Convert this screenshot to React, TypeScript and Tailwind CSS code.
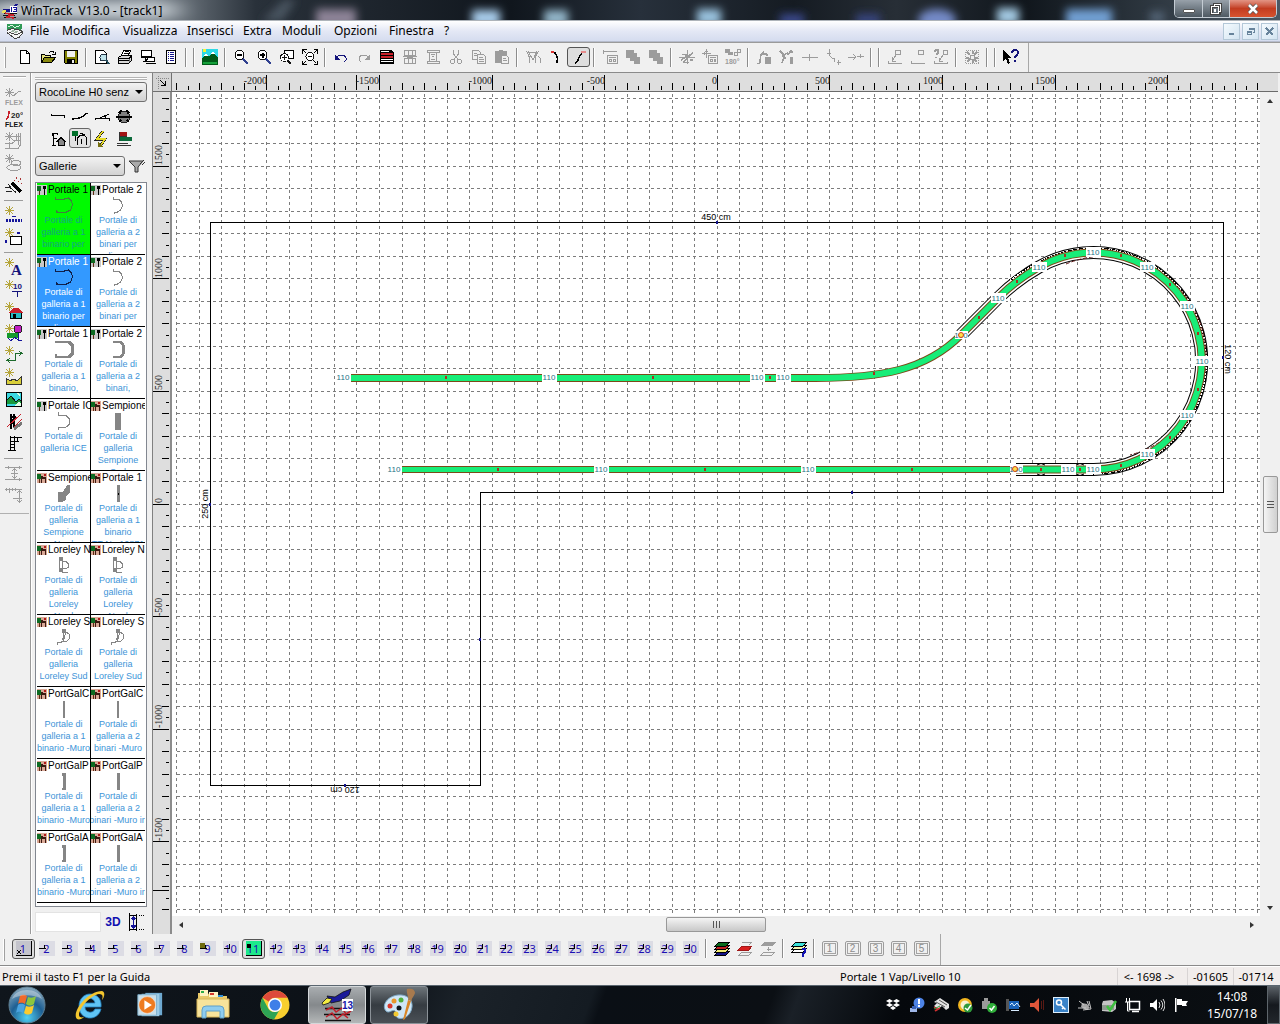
import React from "react";

type Kids = { children?: React.ReactNode };

const UI = "font-['Noto_Sans',sans-serif]";
const ARIAL = "font-['Liberation_Sans',Arial,sans-serif]";

function Icon({ children, size = 16, smooth = false }: Kids & { size?: number; smooth?: boolean }) {
  return (
    <svg
      viewBox={`0 0 ${size} ${size}`}
      width={size}
      height={size}
      fill="none"
      shapeRendering={smooth ? "auto" : "crispEdges"}
      aria-hidden="true"
      className="shrink-0"
    >
      {children}
    </svg>
  );
}

const K = "#000";
const G = "#9c9c9c";

const S = ({ d, c = K, w = 1, f = "none" }: { d: string; c?: string; w?: number; f?: string }) => (
  <path d={d} stroke={c} strokeWidth={w} fill={f} />
);
const F = ({ d, c = K }: { d: string; c?: string }) => <path d={d} fill={c} />;

/* ---------- title bar ---------- */

function TitleBar() {
  return (
    <header className="relative flex h-[21px] shrink-0 items-center overflow-hidden bg-[#121820]">
      <svg className="absolute inset-0 h-full w-full" viewBox="0 0 1280 21" preserveAspectRatio="none" aria-hidden="true">
        <defs>
          <filter id="soft" x="-30%" y="-80%" width="160%" height="260%">
            <feGaussianBlur stdDeviation="4" />
          </filter>
          <filter id="wide" x="-30%" y="-80%" width="160%" height="260%">
            <feGaussianBlur stdDeviation="14 5" />
          </filter>
          <linearGradient id="tb" x1="0" y1="0" x2="1" y2="0">
            <stop offset="0" stopColor="#59636e" />
            <stop offset="0.12" stopColor="#7d868e" />
            <stop offset="0.2" stopColor="#29313a" />
            <stop offset="0.4" stopColor="#10161d" />
            <stop offset="0.5" stopColor="#27303b" />
            <stop offset="0.62" stopColor="#151b22" />
            <stop offset="0.7" stopColor="#272e36" />
            <stop offset="0.8" stopColor="#10161c" />
            <stop offset="1" stopColor="#4b5864" />
          </linearGradient>
        </defs>
        <rect width="1280" height="21" fill="url(#tb)" />
        <rect x="-10" y="2" width="185" height="16" fill="#c3cad0" filter="url(#wide)" />
        <g filter="url(#soft)">
          <path d="M262 21l22-21h12l-14 21z" fill="#4a5560" />
          <rect x="316" y="9" width="40" height="18" fill="#8d8397" />
          <rect x="472" y="10" width="28" height="16" fill="#a9cdec" />
          <rect x="544" y="10" width="24" height="16" fill="#93b6c9" />
          <rect x="697" y="9" width="24" height="16" fill="#9ac3df" />
          <rect x="780" y="14" width="24" height="12" fill="#3a4a8c" />
          <rect x="856" y="14" width="24" height="12" fill="#39447f" />
          <ellipse cx="937" cy="20" rx="19" ry="11" fill="#7389c6" />
          <rect x="997" y="8" width="22" height="16" fill="#a4cbe4" />
          <rect x="1066" y="9" width="46" height="18" fill="#719fd2" />
          <rect x="1150" y="12" width="14" height="10" fill="#56677a" />
        </g>
        <rect y="20" width="1280" height="1" fill="#aeb4ba" />
      </svg>
      <span className="relative ml-[2px]">
        <AppLogo />
      </span>
      <h1 className={`relative ml-[3px] whitespace-pre text-[12px] leading-[20px] text-black ${UI}`}>
        WinTrack  V13.0 - [track1]
      </h1>
      <div className="relative mr-[3px] ml-auto flex h-[18px] self-start overflow-hidden rounded-b-[5px] border border-t-0 border-[#c4ccd4]">
        <button aria-label="Minimize" className="flex w-[28px] items-center justify-center border-r border-[#c4ccd4] bg-gradient-to-b from-[#98a1aa] to-[#4e5962]">
          <span className="mt-1 h-[4px] w-[12px] rounded-[1px] border border-[#555] bg-white" />
        </button>
        <button aria-label="Restore" className="flex w-[27px] items-center justify-center border-r border-[#c4ccd4] bg-gradient-to-b from-[#98a1aa] to-[#4e5962]">
          <Icon size={12}>
            <S d="M1 3h8v8H1zM4 3V1h7v7H9" c="#444" w={3} />
            <S d="M4 3V1.500h6.500v7H9M1.500 3.500h7v7h-7zM4.500 6v2h1V6z" c="#fff" />
          </Icon>
        </button>
        <button aria-label="Close" className="flex w-[46px] items-center justify-center bg-gradient-to-b from-[#e29484] via-[#c23c20] to-[#d8532f]">
          <Icon size={12} smooth>
            <S d="M2 2l8 8M10 2l-8 8" c="#555" w={4} />
            <S d="M2 2l8 8M10 2l-8 8" c="#fff" w={2.5} />
          </Icon>
        </button>
      </div>
    </header>
  );
}

function AppLogo() {
  return (
    <Icon>
      <F d="M1 6h6l7-5h2l-3 5-6 3H1z" c="#14148a" />
      <F d="M1 7h3v3H0z" c="#e8e060" />
      <F d="M8 3h7v7H8z" c="#fff" />
      <S d="M9.500 4v5M11 4.500h3v4h-3M12 6.500h2" c="#14149a" />
      <S d="M2 10.500h13M1 12.500h12M2 14.500h12" c="#111" />
      <S d="M3 10l8 2-7 2 8 1" c="#c8202a" w={1.5} />
    </Icon>
  );
}

/* ---------- menu bar ---------- */

const MENUS: [string, string][] = [
  ["File", "w-[32px]"],
  ["Modifica", "w-[61px]"],
  ["Visualizza", "w-[64px]"],
  ["Inserisci", "w-[56px]"],
  ["Extra", "w-[39px]"],
  ["Moduli", "w-[52px]"],
  ["Opzioni", "w-[55px]"],
  ["Finestra", "w-[55px]"],
  ["?", "w-[20px]"],
];

function MenuBar() {
  return (
    <nav className="flex h-[21px] shrink-0 items-center border-b border-[#b6bccc] bg-gradient-to-b from-white via-[#e4e8f5] to-[#d5dcef]">
      <span className="ml-[7px] mr-[7px]">
        <Icon>
          <F d="M0 1h15v5l-3 2-6-2-6 2z" c="#2f9a57" />
          <S d="M1 3.500l4-1 3 2 5-2" c="#dff5e4" />
          <F d="M0 7l5-2 9 2 2 3-4 5-4 1-8-7z" c="#f5f5f5" />
          <S d="M0 7.500l5-2 9 2 2 2-4 5-4 1-8-6M2 9l7 3 6-3" c="#444" />
          <S d="M4 8l6 2M5 7l6 2" c="#9ab09e" />
        </Icon>
      </span>
      {MENUS.map(([m, w]) => (
        <button key={m} className={`${w} shrink-0 text-left text-[12px] leading-[20px] text-black ${UI}`}>
          {m}
        </button>
      ))}
      <div className="mr-[2px] ml-auto flex gap-[2px]">
        {["Minimize document", "Restore document", "Close document"].map((n, i) => (
          <button key={n} aria-label={n} className="flex h-[17px] w-[17px] items-center justify-center border border-[#b4c8d8] bg-gradient-to-br from-[#f4fafe] to-[#d3e4f1]">
            <Icon size={9}>
              {i === 0 && <F d="M2 6h5v2H2z" c="#67839b" />}
              {i === 1 && <S d="M3.500 3V1.500h5v4H7M1.500 4.500h4v3h-4zM3 2h6M1 5h5" c="#67839b" />}
              {i === 2 && <S d="M1 1l7 7M8 1l-7 7" c="#67839b" w={2} />}
            </Icon>
          </button>
        ))}
      </div>
    </nav>
  );
}

/* ---------- main toolbar ---------- */

const magnifier = (
  <>
    <circle cx="6.500" cy="6" r="4.500" stroke="#111" fill="#fff" />
    <S d="M10 10l5 5" c="#2f3f8f" w={2.500} />
  </>
);

const TOOL_GROUPS: ([string, React.ReactNode] | "|")[] = [
  ["Nuovo", <><S d="M3.500 1.500h6l3 3v10h-9z" f="#fff" /><S d="M9.500 1.500v3h3" /></>],
  ["Apri", <><S d="M1.500 13.500v-8h3l1 1h5v2" f="#e8e480" /><S d="M1.500 13.500l3-5h11l-4 5z" f="#8a8a10" /><S d="M9 3.500l2-1h2l1.500 2M12 5.500h3v-3" /></>],
  ["Salva", <><S d="M1.500 1.500h13v13h-12l-1-1z" f="#808000" /><F d="M4 2h8v6H4z" c="#f0f0f0" /><F d="M4 10h8v4H4z" /><F d="M9 11h2v3H9z" c="#f0f0f0" /></>],
  "|",
  ["Anteprima", <><S d="M1.500 1.500h8l3 3v10h-11z" f="#fff" /><circle cx="9.500" cy="8.500" r="3.500" stroke="#234" fill="#bfe3ea" /><S d="M12 11l3 4" c="#234b5c" w={2} /></>],
  ["Stampa", <><S d="M4.500 6.500l2-5h7l-2 5" f="#fff" /><S d="M1.500 8.500l3-2h10v5l-3 3h-10z" f="#d8d8d8" /><S d="M2 9.500h10v4M2 11.500h10M12 9.500l3-3M7 4.500h5M8 2.500h4" /><F d="M12 10h1v3h-1z" c="#777" /></>],
  ["Esporta", <><S d="M1.500 1.500h10v6h-10z" f="#fff" /><S d="M1 8.500h12M5 9v3M3 12.500h3" /><S d="M7.500 8.500h7v4h-8zM6 14.500h10" f="#fff" /></>],
  ["Elenco", <><S d="M3.500 1.500h9v13h-9z" f="#fff" /><S d="M5 3.500h1M7 3.500h4M5 5.500h1M7 5.500h4M5 7.500h1M7 7.500h4M5 9.500h1M7 9.500h4M5 11.500h1M7 11.500h4" c="#14148a" /></>],
  "|",
  "|",
  ["Immagine", <><F d="M0 0h16v16H0z" c="#2ed9e6" /><F d="M0 16V9l4-4 3 3 4-5 5 6v7z" c="#005a18" /><F d="M4 4l2 3H2zM11 2l2 3H9z" c="#fff" /><F d="M1 0h3v3H1z" c="#f6f236" /><F d="M1 13h14v2H1z" c="#15a03a" /></>],
  "|",
  ["Riduci", <>{magnifier}<F d="M4 5h5v2H4z" /></>],
  ["Ingrandisci", <>{magnifier}<F d="M4 5h5v2H4zM5.500 3.500h2v5h-2z" /></>],
  ["Zoom area", <><S d="M5.500 1.500h9v8h-9z" f="#fff" /><circle cx="5.500" cy="8.500" r="4" stroke="#111" fill="#fff" /><S d="M3 8.500h5M5.500 6v5M9 12l3 3" c="#111" w={1.500} /></>],
  ["Zoom tutto", <><circle cx="8" cy="7.500" r="4" stroke="#111" fill="#fff" /><S d="M6 7.500h4M11 11l3 3M.5 4.500v-4h4M11.500.5h4v4M.5 11.500v4h4M15.500 11.500v4h-4M1 1l3 3M15 1l-3 3M1 15l3-3" /></>],
  "|",
  ["Annulla", <><S d="M4 8l2-2h5l2 3v2l-2 2" c="#14147a" /><F d="M2 5v6h5z" c="#14147a" /></>],
  ["Ripristina", <><S d="M12 8l-2-2H5L3 9v2l2 2" c={G} /><F d="M14 5v6H9z" c={G} /></>],
  ["Proprietà", <><F d="M1 1h11l3 3v11H1z" /><F d="M2 4h12v2H2zM2 7h12v2H2z" c="#c8202a" /><F d="M2 10h12v1H2zM2 12h12v1H2zM2 2h8v1H2z" c="#fff" /></>],
  ["Griglia", <><S d="M2.500 1.500h11v5h-11zM2.500 9.500h11v5h-11zM6.500 1v5M10.500 1v5M6.500 10v4M10.500 10v4M1 7.500h14" c={G} /><F d="M5 6h6v4H5z" c={G} /></>],
  ["Cornice", <><S d="M2 1.500h12v2H2zM2 12.500h12v2H2zM4.500 3v10M11.500 3v10M6 5.500h4M7 7.500h2M6 10.500h4" c={G} /></>],
  ["Taglia", <><S d="M5.500 1v4l5 6M10.500 1v4l-5 6" c={G} /><circle cx="4.500" cy="12.500" r="2" stroke={G} /><circle cx="11.500" cy="12.500" r="2" stroke={G} /></>],
  ["Copia", <><S d="M1.500 1.500h6l2 2v7h-8z" c={G} f="#f0f0f0" /><S d="M6.500 5.500h6l2 2v7h-8zM8 8.500h4M8 10.500h5M8 12.500h5M3 4.500h3M3 6.500h3" c={G} f="#f0f0f0" /></>],
  ["Incolla", <><F d="M1 2h4V1h4v1h4v12H1z" c={G} /><S d="M7.500 6.500h5l2 2v6h-7zM9 9.500h3M9 11.500h4" c={G} f="#f0f0f0" /></>],
  "|",
  ["Binario V", <S d="M1 2c4 3 3 8 4 12M11 14c-1-4 0-9 3-12M4 3h7M3 2l5 9 4-9M13 7l2 2v5" c={G} />],
  ["Curva", <><S d="M5 3c4 1 5 6 4 11" w={1.500} /><F d="M3 2h3v2H3z" c="#d33" /></>],
  ["Flessibile", <><S d="M4 14c4 0 4-11 9-11" w={1.500} /><F d="M10 2h5v2h-5z" c="#e68a8a" /></>],
  "|",
  ["Scheda", <><S d="M1 2.500h14M1.500 1v4M5.500 6.500h10v8h-10zM7 8.500h7M7.500 10.500h2v2h-2zM11.500 10.500h2v2h-2z" c={G} /></>],
  ["Avanti", <F d="M1 1h8v3h3v4h3v7H9v-3H5V9H1z" c={G} />],
  ["Indietro", <F d="M1 1h8v3h3v4h3v7H9v-3H5V9H1z" c={G} />],
  "|",
  ["Ruota", <S d="M0 8.500h16M8.500 1v14M2 11l12-7M5 13l8-9M3 5.500h4v2M11 11h3M4 13.500h6" c={G} w={1.500} />],
  ["Sposta", <><S d="M0 4.500h9M4.500 0v9M2 3v3M3 2h3M6.500 6.500h9v8h-9zM8 8.500h6M8.500 10.500h2v2h-2zM12.500 10.500h1v2h-1z" c={G} /></>],
  ["Ruota 180°", <><F d="M0 0h5v3h3v3H3V4H0z" c={G} /><S d="M9.500 6.500v-3h3v-3h3v3h-3M9 6.500h3v-3" c={G} /><text x="0" y="15" fontSize="7" fontWeight="bold" fill={G} className="font-['Liberation_Sans',sans-serif]">180°</text></>],
  "|",
  ["Connetti", <><S d="M1 14.500h3M4 14c0-6 1-11 4-11M5 5h5l2 2" c={G} w={1.500} /><F d="M9 8h6v7H9z" c={G} /></>],
  ["Dividi", <><S d="M1 2l3 3v3M3 14c2-6 2-10 6-10M11 3h3M12 1l-3 5M4 9h3" c={G} w={1.500} /><F d="M11 8h3v7h-3z" c={G} /></>],
  ["Allinea", <S d="M0 8.500h16M7.500 5v7" c={G} />],
  ["Curva continua", <S d="M5 0c-2 4-1 8 4 10M2 4.500h4M9 9v4M12 13.500h4M13 11v5" c={G} />],
  ["Estendi", <S d="M0 8.500h8M5 5l3 3-3 3M9 7.500h7M12.500 5v4" c={G} />],
  "|",
  "|",
  ["Livello giù", <S d="M1 14.500h14M1.500 12v3M8.500 1.500h5v4h-5zM9 6l-4 6M5 8v4h4" c={G} />],
  ["Livello", <S d="M1 14.500h14M1.500 12v3M8.500 1.500h5v4h-5z" c={G} />],
  ["Livello ?", <><S d="M1 14.500h14M1.500 12v3M10.500 1.500h4v4h-4zM10 6l-4 6M6 9v3h4M14.500 13v2" c={G} /><S d="M1 3l2-2h2v3L3 6M3 8v1" c={G} w={2} /></>],
  "|",
  ["Centra", <><path d="M1.500 1.500h13v13h-13z" stroke={G} strokeDasharray="1 1" /><S d="M8.500 2v3M8.500 11v3M2 8.500h3M11 8.500h3M3 3l3 3M13 3l-3 3M3 13l3-3M13 13l-3-3" c={G} w={2} /><S d="M6.500 6.500h4v4h-4z" c={G} /></>],
  "|",
  "|",
  ["Guida contestuale", <><F d="M0 1v11l3-2 2 5 2-1-2-5h4z" /><S d="M9 4c0-4 6-4 6 0 0 2-3 2-3 5M12 11v2" c="#14147a" w={2} /></>],
];

function Separator() {
  return (
    <span className="flex w-[8px] justify-center">
      <span className="h-[19px] w-[2px] border-r border-r-white bg-[#8c8c8c]" />
    </span>
  );
}

function Toolbar() {
  return (
    <div className="flex h-[31px] shrink-0 items-center border-t border-b border-t-[#9a9a9a] border-b-[#8a8a8a] bg-[#f0f0f0]">
      <span className="mx-[4px] h-[21px] w-[2px] border-r border-r-[#a0a0a0] bg-white" />
      <div className="ml-[3px] flex h-full items-center border-r border-[#a8a8a8] pr-[6px] pb-[1px]" role="toolbar" aria-label="Strumenti">
        {TOOL_GROUPS.map((t, i) =>
          t === "|" ? (
            <Separator key={i} />
          ) : (
            <button
              key={i}
              aria-label={t[0]}
              className={
                t[0] === "Flessibile"
                  ? "flex h-[20px] w-[23px] items-center justify-center rounded-[3px] border border-[#555] bg-[#dedede]"
                  : "flex h-[22px] w-[23px] items-center justify-center"
              }
            >
              <Icon>{t[1]}</Icon>
            </button>
          ),
        )}
      </div>
    </div>
  );
}

/* ---------- left tool strip ---------- */

const Spark = ({ c = "#b5a53a" }: { c?: string }) => <S d="M4.500 0v9M0 4.500h9M1 1l7 7M8 1L1 8" c={c} />;

const Tiny = ({ x, y, c, children, s = 7 }: Kids & { x: number; y: number; c: string; s?: number }) => (
  <text x={x} y={y} fontSize={s} fontWeight="bold" fill={c} className="font-['Liberation_Sans',sans-serif]">
    {children}
  </text>
);

const STRIP: ([string, React.ReactNode] | "|")[] = [
  ["Nuovo flessibile", <><Spark c={G} /><S d="M8 7.500c3 0 4-5 8-4" c={G} /><Tiny x={0} y={17} c={G}>FLEX</Tiny></>],
  ["Flessibile 20", <><S d="M1 9c3-1 3-5 3-8" c="#c8202a" w={1.500} /><Tiny x={6} y={8} s={8} c="#222">20°</Tiny><Tiny x={0} y={17} c="#111">FLEX</Tiny></>],
  ["Binario parallelo", <><Spark c={G} /><S d="M0 11.500h7l4-3v-7M0 16.500h13l2-3V1M8 8.500h8M8 4.500h8M4.500 10v7M13.500 1v12" c={G} /></>],
  ["Elicoidale", <><Spark c={G} /><ellipse cx="11" cy="9" rx="5" ry="2.500" stroke={G} /><ellipse cx="9" cy="13.500" rx="7" ry="3" stroke={G} /></>],
  ["Bacchetta magica", <><S d="M7 7l9 9" w={3} /><S d="M0 11.500h5l6 5M1 15.500h6M3 8l4 5" c="#222" /><S d="M11 1v2M15 2v2M13 5v1M16 7v1M9 4v1" c="#a33" /></>],
  "|",
  ["Nuova linea", <><Spark /><path d="M1 14.500h16" stroke="#14149a" strokeWidth="3" strokeDasharray="2 1" /><S d="M7 10.500h4" c="#14149a" /></>],
  ["Nuovo rettangolo", <><Spark /><S d="M5.500 8.500h11v8h-11z" f="#fff" /><S d="M1 12v3M12 5h3" c="#14149a" w={2} /></>],
  "|",
  ["Nuovo testo", <><Spark /><text x="6" y="17" fontSize="15" fontWeight="bold" fill="#14147a" className="font-['Liberation_Serif',serif]">A</text></>],
  ["Nuova quota", <><Spark /><Tiny x={8} y={9} c="#14147a" s={8}>10</Tiny><S d="M7 11.500h10M12.500 11v6" c="#14147a" w={1.500} /></>],
  ["Nuova casa", <><Spark /><S d="M5.500 10.500h11v6h-11z" f="#25bdc4" /><F d="M3 11l5-5h6l4 5z" c="#c8202a" /><F d="M8 12h3v5H8z" /></>],
  ["Nuovo albero", <><Spark /><circle cx="13" cy="5" r="4" fill="#c21fc2" stroke="#222" /><F d="M2 9h11v5H2z" c="#159a2c" /><S d="M13 9v7M3 14.500l3 2 4-3 4 3h3" c="#14149a" /></>],
  ["Nuovo percorso", <><Spark /><S d="M3 14.500h7v-7h7M14 5l3 2.500-3 2M5 12l-3 2.500 3 2" c="#1c6a2c" /></>],
  ["Nuovo terreno", <><Spark /><S d="M1.500 16.500v-6l3 2 4-1 4 1 4-4v8z" c="#333" f="#d8ce3a" /></>],
  ["Paesaggio", <><S d="M1.500 2.500h15v14h-15z" f="#39d7e0" /><F d="M2 14v-4l4-4 5 6 3-3 2 2v3z" c="#179a3c" /><S d="M2 10l4-4 5 6 3-3 2 2" c="#111" /><F d="M9 16l4-4 3 1v3zM12 3l3 1v2l-2-1z" c="#dfffe4" /></>],
  ["Muro", <><S d="M5.500 2v15M9 2v13M5 5h6M5 8h5M5 11h4" w={2} /><S d="M2 15L16 2M8 16l9-9" c="#c8202a" /><S d="M9 17l8-6" c="#777" w={3} /></>],
  ["Catenaria", <><S d="M5.500 2v15M9.500 2v15M5 3.500h12M5 7.500h9M3 16.500h8M5 10.500h4M5 13.500h4M12.500 4v4" /></>],
  "|",
  ["Distanza verticale", <S d="M0 3.500h17M0 15.500h17M3.500 2v3M9.500 5v9M7 7l2.500-2L12 7M7 12l2.500 2 2.500-2M6 9.500h7M14.500 2v3M14.500 14v3" c={G} />],
  ["Distanza orizzontale", <S d="M0 3.500h17M1.500 2v3M4.500 2v5M7.500 2v3M10.500 2v3M14.500 4v13M12 7l2.500-2L17 7M12 14l2.500 2L17 14M8 12.500h9" c={G} />],
];

function Strip() {
  return (
    <aside className="w-[31px] shrink-0 border-r border-[#9a9a9a] bg-[#f0f0f0] pt-[3px]">
      <span className="mx-[3px] block h-[2px] w-[23px] border-t border-[#a8a8a8] bg-white" />
      <div className="mr-[1px] flex flex-col border-b border-[#b0b0b0] pt-[8px] pb-[7px]" role="toolbar" aria-label="Inserimento">
        {STRIP.map((t, i) =>
          t === "|" ? (
            <span key={i} className="flex h-[8px] items-center justify-center">
              <span className="mr-[2px] h-px w-[19px] bg-[#9c9c9c]" />
            </span>
          ) : (
            <button key={i} aria-label={t[0]} className="flex h-[22px] items-center pl-[5px]">
              <Icon size={18}>{t[1]}</Icon>
            </button>
          ),
        )}
      </div>
    </aside>
  );
}

/* ---------- palette ---------- */

const PALETTE_TOOLS: [string, React.ReactNode][] = [
  ["Binari dritti", <S d="M1 6.500h13v2M1.500 5v2" />],
  ["Curve", <S d="M1 11v-1.500h5l5-2 3-3h2" w={1.500} />],
  ["Scambi", <S d="M1 9.500h14v2M1.500 9v2M6 9l9-4M11 7v2" />],
  ["Piattaforme", <><circle cx="8" cy="8" r="6" fill="#808080" stroke="#222" /><S d="M0 8h16M3 3l2 2M13 3l-2 2M3 13l2-2M13 13l-2-2M5 1v2M11 1v2" w={1.500} /></>],
  ["Edifici", <><S d="M3.500 2v12M2.500 2v3M3 2.500h5M3 7.500h4M7.500 2v2M2 14.500h4" /><S d="M7 10.500l4-4 4 4h-1v4H8v-4z" f="#888" /></>],
  ["Portali", <><F d="M0 1h6v5H0z" c="#00702a" /><S d="M5.500 15V8l3-3h4l2 3v7M9 9v5M8 3l5 2M3 6v5" /></>],
  ["Elettrico", <><S d="M9 0L3 8h8l-4 6" c="#222" w={3} /><S d="M9 0L3 8h8l-4 6" c="#e6da24" w={1.500} /><F d="M4 11v5h5z" c="#776f10" /></>],
  ["Veicoli", <><F d="M3 1h8v5H3z" c="#a01515" /><F d="M3 6h13v4H3z" c="#0b6a3a" /><S d="M3 5.500h8M1 12.500h11M1 14.500h14M3.500 1v9" c="#333" /></>],
];

type Shape = "hook" | "hookS" | "box" | "boxS" | "ice" | "block" | "wedge" | "bar" | "dee" | "diag" | "thin" | "step" | "notch";

type Tile = { title: string; shape: Shape; lines: string[]; kind: "a" | "b"; tone?: "green" | "blue" };

const TILES: Tile[] = [
  { title: "Portale 1", shape: "hook", lines: ["Portale di", "galleria a 1", "binario per"], kind: "a", tone: "green" },
  { title: "Portale 2", shape: "hookS", lines: ["Portale di", "galleria a 2", "binari per", "linee"], kind: "a" },
  { title: "Portale 1", shape: "hook", lines: ["Portale di", "galleria a 1", "binario per", "linee"], kind: "a", tone: "blue" },
  { title: "Portale 2", shape: "hookS", lines: ["Portale di", "galleria a 2", "binari per"], kind: "a" },
  { title: "Portale 1", shape: "box", lines: ["Portale di", "galleria a 1", "binario,"], kind: "a" },
  { title: "Portale 2", shape: "boxS", lines: ["Portale di", "galleria a 2", "binari,"], kind: "a" },
  { title: "Portale ICE", shape: "ice", lines: ["Portale di", "galleria ICE"], kind: "a" },
  { title: "Sempione", shape: "block", lines: ["Portale di", "galleria", "Sempione", "Sud"], kind: "b" },
  { title: "Sempione", shape: "wedge", lines: ["Portale di", "galleria", "Sempione", "Nord"], kind: "b" },
  { title: "Portale 1", shape: "bar", lines: ["Portale di", "galleria a 1", "binario", "TT No 10871"], kind: "b" },
  { title: "Loreley N", shape: "dee", lines: ["Portale di", "galleria", "Loreley", "Nord"], kind: "b" },
  { title: "Loreley N", shape: "dee", lines: ["Portale di", "galleria", "Loreley", "Nord"], kind: "b" },
  { title: "Loreley S", shape: "diag", lines: ["Portale di", "galleria", "Loreley Sud"], kind: "b" },
  { title: "Loreley S", shape: "diag", lines: ["Portale di", "galleria", "Loreley Sud"], kind: "b" },
  { title: "PortGalC", shape: "thin", lines: ["Portale di", "galleria a 1", "binario -Muro"], kind: "b" },
  { title: "PortGalC", shape: "thin", lines: ["Portale di", "galleria a 2", "binari -Muro"], kind: "b" },
  { title: "PortGalP", shape: "step", lines: ["Portale di", "galleria a 1", "binario -Muro"], kind: "b" },
  { title: "PortGalP", shape: "notch", lines: ["Portale di", "galleria a 2", "binari -Muro in"], kind: "b" },
  { title: "PortGalA", shape: "step", lines: ["Portale di", "galleria a 1", "binario -Muro"], kind: "b" },
  { title: "PortGalA", shape: "notch", lines: ["Portale di", "galleria a 2", "binari -Muro in"], kind: "b" },
];

function TileShape({ shape, c }: { shape: Shape; c: string }) {
  const D: Record<Shape, React.ReactNode> = {
    hook: <S d="M1.500 1v2h9l4-1 3 3 1 4-2 5-4 2h-9l-1-1v2" c={c} />,
    hookS: <S d="M5.500 1v2h5l3 3 1 4-2 4-3 2h-3v2" c={c} />,
    box: <><S d="M1 2h16M1 17h16M1.500 14v4" c={c} w={2} /><S d="M15 2l3 3v9l-3 3" c={c} w={3} /></>,
    boxS: <><S d="M5 2h9M5 17h9" c={c} w={2} /><S d="M13 2l2 3v9l-2 3" c={c} w={3} /></>,
    ice: <S d="M4.500 0v3h7l4 4v5l-3 3-8 1v2" c={c} />,
    block: <F d="M7 1h6v17H7z" c={c} />,
    wedge: <F d="M4 8h5l4-7h3v7l-4 4v4l-4 2H4z" c={c} />,
    bar: <><F d="M9 1h3v17H9z" c={c} /><F d="M10 9h1v2h-1z" /></>,
    dee: <><F d="M5 1h4v4H5zM5 12h4v4H5z" c={c} /><S d="M5.500 4v9M8.500 4v9M9 5.500h3l2 2v4l-2 1H9M8.500 15v1.500H14" c={c} /></>,
    diag: <><F d="M8 1h4v4H8z" c={c} /><S d="M12 4l3 2v5l-2 2h-3l-2-3M9.500 5v8M11.500 5l-2 8-2 1H3v3" c={c} /></>,
    thin: <F d="M9 1h2v17H9z" c={c} />,
    step: <F d="M8 1h4v17H8v-2h1V4H8z" c={c} />,
    notch: <F d="M9 1h3v17H9z" c={c} />,
  };
  return (
    <svg viewBox="0 0 20 19" width="20" height="19" fill="none" shapeRendering="crispEdges" className="shrink-0" aria-hidden="true">
      {D[shape]}
    </svg>
  );
}

function TileView({ t, odd }: { t: Tile; odd: boolean }) {
  const bg = t.tone === "green" ? "bg-[#00fa00]" : t.tone === "blue" ? "bg-[#3399ff]" : "bg-white";
  const ink = t.tone === "blue" ? "text-white" : "text-black";
  const desc = t.tone === "green" ? "text-[#12a884]" : t.tone === "blue" ? "text-white" : "text-[#3d94d8]";
  return (
    <button
      className={`flex h-[72px] min-w-0 flex-col items-stretch overflow-hidden border-b border-black ${odd ? "" : "border-r"} ${bg} ${ARIAL}`}
    >
      <span className={`flex h-[13px] items-center gap-[1px] text-[10px] leading-[13px] whitespace-nowrap ${ink}`}>
        <Icon size={10}>
          <F d="M0 0h10v10H0z" c={t.kind === "a" ? "#c9c9c9" : "#d9a896"} />
          <F d="M0 1h4v5H0z" c="#0d6b22" />
          <F d="M2 6h1v4H2z" c="#5c2a10" />
          {t.kind === "a" ? (
            <F d="M6 1h3v3H8v6H7V4H6z" />
          ) : (
            <>
              <F d="M4 3h2v1h3v2H4zM4 6h1v4H4zM8 6h1v4H8z" c="#3a1a12" />
              <F d="M7 1h2v2H7z" c="#b01818" />
            </>
          )}
        </Icon>
        {t.title}
      </span>
      <span className="flex h-[18px] justify-center">
        <TileShape shape={t.shape} c={t.tone === "green" ? "#3f7f3f" : t.tone === "blue" ? "#10204a" : "#858585"} />
      </span>
      <span className={`flex flex-col items-center text-[9px] leading-[12px] whitespace-nowrap ${desc}`}>
        {t.lines.map((l) => (
          <span key={l}>{l}</span>
        ))}
      </span>
    </button>
  );
}

function Combo({ label, value, options }: { label: string; value: string; options: string[] }) {
  return (
    <div className="relative min-w-0 flex-1">
      <select
        aria-label={label}
        defaultValue={value}
        className={`block h-[20px] w-full appearance-none overflow-hidden rounded-[3px] border border-[#707070] bg-gradient-to-b from-[#f2f2f2] to-[#d2d2d2] pr-[14px] pl-[3px] text-[11px] leading-[18px] text-black ${ARIAL}`}
      >
        {options.map((o) => (
          <option key={o}>{o}</option>
        ))}
      </select>
      <span className="pointer-events-none absolute top-[8px] right-[4px] h-0 w-0 border-x-4 border-t-4 border-x-transparent border-t-black" />
    </div>
  );
}

function Palette() {
  return (
    <section className="flex w-[121px] shrink-0 flex-col border-l border-white bg-[#f0f0f0] pr-[5px] pl-[3px]">
      <span className="mt-[4px] mb-[2px] h-[3px] shrink-0 border-t border-b border-[#b4b4b4] bg-white" />
      <div className="flex">
        <Combo label="Catalogo" value="RocoLine H0 senz" options={["RocoLine H0 senz", "RocoLine H0 con"]} />
      </div>
      <div className="mx-auto mt-[4px] grid grid-cols-4">
        {PALETTE_TOOLS.map(([n, ic]) => (
          <button
            key={n}
            aria-label={n}
            className={
              n === "Portali"
                ? "flex h-[20px] w-[22px] items-center justify-center rounded-[3px] border border-[#666] bg-[#e2e2e2]"
                : "flex h-[22px] w-[22px] items-center justify-center"
            }
          >
            <Icon>{ic}</Icon>
          </button>
        ))}
      </div>
      <div className="mt-[6px] flex items-center gap-[2px]">
        <Combo label="Categoria" value="Gallerie" options={["Gallerie", "Ponti"]} />
        <button aria-label="Filtro" className="flex h-[20px] w-[20px] items-center justify-center">
          <Icon size={18} smooth>
            <S d="M1 4h14l-5 6v5H7v-5z" c="#333" f="#aaa" />
            <S d="M12 7l4-4M14 8l3-3" c="#333" />
          </Icon>
        </button>
      </div>
      <div className="mt-[6px] flex-1 border border-[#828790] bg-white p-px pt-0">
        <div className="grid grid-cols-2">
          {TILES.map((t, i) => (
            <TileView key={i} t={t} odd={i % 2 === 1} />
          ))}
        </div>
      </div>
      <div className="mt-[4px] mb-[2px] flex h-[21px] items-center">
        <input aria-label="Ricerca" className="h-[20px] w-[66px] border border-[#e3e3e3] bg-white text-[11px]" />
        <button className="w-[24px] text-center font-['Liberation_Sans'] text-[12px] font-bold text-[#1010b0]">3D</button>
        <button aria-label="Altezza" className="flex w-[22px] justify-center">
          <Icon size={18}>
            <S d="M2.500 0v18M9.500 1v17M2 2.500h8M2 16.500h8M12 2.500h1M14 2.500h1M16 2.500h1M12 16.500h1M14 16.500h1M16 16.500h1" />
            <S d="M6.500 4v11M4.500 6.500l2-2 2 2M4.500 12.500l2 2 2-2" c="#14149a" w={1.500} />
          </Icon>
        </button>
      </div>
    </section>
  );
}

/* ---------- plan ---------- */

const OX = 717.3;
const OY = 504;
const STEP = 22.52;
const snap = (v: number) => Math.round(v) + 0.5;
const range = (a: number, b: number) => Array.from({ length: b - a + 1 }, (_, i) => a + i);

function TopRuler() {
  return (
    <svg className="h-full w-full font-['Liberation_Serif',serif]" shapeRendering="crispEdges" role="img" aria-label="Righello orizzontale">
      <g transform="translate(-172 -73)">
        {range(-60, 60).map((k) => {
          const x = snap(OX + (k * STEP) / 2 - 0.5);
          if (x < 175) return null;
          const major = k % 10 === 0;
          const top = major ? 75 : k % 2 === 0 ? 83 : 86;
          return <path key={k} d={`M${x} ${top}V90`} stroke="#000" />;
        })}
        <path d="M356.500 75V90" stroke="#000" />
        {range(-4, 4).map((k) => (
          <text key={k} x={Math.round(OX + k * 5 * STEP)} y="84" fontSize="10" textAnchor="end" fill="#222">
            {k * 500}
          </text>
        ))}
      </g>
    </svg>
  );
}

function LeftRuler() {
  return (
    <svg className="h-full w-full font-['Liberation_Serif',serif]" shapeRendering="crispEdges" role="img" aria-label="Righello verticale">
      <g transform="translate(-153 -92)">
        {range(-36, 60).map((k) => {
          const y = snap(OY + (k * STEP) / 2 - 0.5);
          if (y < 97 || y > 912) return null;
          const major = k % 10 === 0;
          const left = major ? 153 : k % 2 === 0 ? 162 : 166;
          return <path key={k} d={`M${left} ${y}H169`} stroke="#000" />;
        })}
        <path d="M153 890.500H169" stroke="#000" />
        {range(-3, 3).map((k) => (
          <text key={k} transform={`translate(162 ${Math.round(OY + k * 5 * STEP) - 1}) rotate(-90)`} fontSize="10" fill="#222">
            {-k * 500}
          </text>
        ))}
      </g>
    </svg>
  );
}

const LABELS: [number, number][] = [
  [343, 377], [549, 377], [757, 377], [783, 377],
  [394, 469], [601, 469], [808, 469], [1068, 469], [1093, 469],
  [998, 298], [1039, 267], [1093, 252], [1147, 267], [1187, 306], [1202, 361], [1187, 415], [1147, 454],
];
const DOTS: [number, number][] = [
  [446, 377], [653, 377], [770, 377], [874, 373], [498, 469], [705, 469], [912, 469], [1041, 469], [1080, 469],
  [979, 317], [1017, 281], [1065, 255], [1121, 255], [1170, 284], [1198, 333], [1198, 389], [1170, 437], [1121, 465],
];
const ENDS: [number, number][] = [[961, 335], [1016, 469]];
const MARKS: [number, number][] = [[717, 222], [852, 492], [480, 639], [345, 785], [210, 504], [1223, 357]];

const OPEN = "M351 378H815C880 378 925 371 961 335";
const LOW = "M402 469.500H1016";
const COVERED = "M961 335L998 298C1010 286 1025 275 1039 267A108.500 108.500 0 1 1 1093.500 469.500H1016";
const RIM = "M1010 281C1020 273 1028 268 1038 264A112 112 0 1 1 1093.500 473";

function Plan() {
  return (
    <svg id="plan" className="h-full w-full bg-white font-['Liberation_Sans',sans-serif]" fill="none" role="img" aria-label="Piano dei binari">
      <g transform="translate(-172 -92)">
        <g stroke="#7c7c7c" strokeDasharray="3 3" shapeRendering="crispEdges">
          {range(-24, 60).map((k) => (
            <path key={`v${k}`} d={`M${snap(OX + k * STEP - 0.5)} 94V3000`} />
          ))}
          {range(-18, 90).map((k) => (
            <path key={`h${k}`} d={`M177 ${snap(OY + k * STEP - 0.5)}H3000`} />
          ))}
        </g>
        <path d="M210.500 222.500H1223.500V492.500H480.500V785.500H210.500Z" stroke="#000" shapeRendering="crispEdges" />
        {MARKS.map(([x, y]) => (
          <rect key={`${x}-${y}`} x={x - 1} y={y - 1} width="2" height="3" fill="#14148a" />
        ))}

        <path d={COVERED} stroke="#000" strokeWidth="13" />
        <path d={COVERED} stroke="#fff" strokeWidth="11" />
        <g shapeRendering="crispEdges">
          <path d={RIM} stroke="#000" strokeWidth="3" />
          <path d={RIM} stroke="#fff" strokeWidth="2" strokeDasharray="2 1" />
        </g>
        <path d="M1066 264A101 101 0 1 1 1130 455" stroke="#5a1010" strokeDasharray="4 2" />
        <path d={COVERED} stroke="#7a4a18" strokeWidth="8" />
        <path d={COVERED} stroke="#17ed78" strokeWidth="6" />
        {[OPEN, LOW].map((d) => (
          <g key={d}>
            <path d={d} stroke="#7a4a18" strokeWidth={d === OPEN ? 8 : 7} />
            <path d={d} stroke="#17ed78" strokeWidth={d === OPEN ? 6 : 5} />
          </g>
        ))}
        {DOTS.map(([x, y]) => (
          <rect key={`${x}-${y}`} x={x - 1} y={y - 1} width="2" height="3" fill="#a8321e" />
        ))}
        {[[1041, 469], [1080, 469]].map(([x, y]) => (
          <path key={x} d={`M${x - 4} ${y - 4}q4 -3 8 0M${x - 4} ${y + 5}q4 3 8 0`} stroke="#000" />
        ))}
        {LABELS.map(([x, y]) => (
          <g key={`${x}-${y}`}>
            <rect x={x - 7} y={y - 5} width="15" height="10" fill="#fff" />
            <text x={x} y={y + 3} fontSize="8" textAnchor="middle" fill="#1a6f84">110</text>
          </g>
        ))}
        {ENDS.map(([x, y]) => (
          <g key={`${x}-${y}`}>
            <rect x={x - 6} y={y - 4} width="13" height="8" fill="#fff" />
            <text x={x} y={y + 3} fontSize="8" textAnchor="middle" fill="#1a6f84">100</text>
            <circle cx={x + (x > 1000 ? -1 : 0)} cy={y} r="2.500" fill="#ffe14a" stroke="#d0401a" />
          </g>
        ))}
        <g fontSize="9" fill="#000" textAnchor="middle">
          <text x="716" y="220">450 cm</text>
          <text transform="translate(208 504) rotate(-90)">250 cm</text>
          <text transform="translate(1225 359) rotate(90)">120 cm</text>
          <text transform="translate(345 787) rotate(180)">120 cm</text>
        </g>
      </g>
    </svg>
  );
}

function Arrow({ dir }: { dir: "up" | "down" | "left" | "right" }) {
  const d = { up: "M1 6l3-4 3 4z", down: "M1 2h6L4 6z", left: "M6 1v6L2 4z", right: "M2 1l4 3-4 3z" }[dir];
  return (
    <button aria-label={`Scorri ${dir}`} className="flex h-[17px] w-[17px] shrink-0 items-center justify-center">
      <Icon size={8} smooth><F d={d} c="#333" /></Icon>
    </button>
  );
}

function Workspace() {
  return (
    <main className="grid min-w-0 flex-1 grid-cols-[19px_minmax(0,1fr)_20px] grid-rows-[19px_minmax(0,1fr)_18px] border-l border-[#808080] bg-[#f0f0f0]">
      <button aria-label="Origine" className="flex items-center justify-center border-r border-b border-[#707070] bg-[#d4d4d4]">
        <Icon size={15}>
          <path d="M.5 3.500h14M3.500.5v14" stroke="#888" strokeDasharray="1 1" />
          <S d="M5 5l5 5M10.500 6v5M6 10.500h5" />
        </Icon>
      </button>
      <div className="overflow-hidden border-b border-[#6a6a6a] bg-[#dedede]">
        <TopRuler />
      </div>
      <div className="mr-[2px] border-b border-[#6a6a6a] bg-[#dedede]" />
      <div className="row-span-2 overflow-hidden border-r-2 border-[#8c8c8c] bg-[#dedede]">
        <LeftRuler />
      </div>
      <div className="overflow-hidden">
        <Plan />
      </div>
      <div className="flex flex-col items-center bg-[#f0f0f0]">
        <Arrow dir="up" />
        <span className="flex-1" />
        <div role="scrollbar" aria-orientation="vertical" aria-controls="plan" aria-valuenow={50} className="flex h-[57px] w-[15px] flex-col items-center justify-center gap-[2px] rounded-[2px] border border-[#989898] bg-gradient-to-r from-[#f4f4f4] to-[#d0d0d0]">
          <span className="h-px w-[7px] bg-[#555]" />
          <span className="h-px w-[7px] bg-[#555]" />
          <span className="h-px w-[7px] bg-[#555]" />
        </div>
        <span className="flex-1" />
        <Arrow dir="down" />
      </div>
      <div className="flex items-start bg-[#f0f0f0]">
        <Arrow dir="left" />
        <span className="flex-1" />
        <div role="scrollbar" aria-orientation="horizontal" aria-controls="plan" aria-valuenow={50} className="mt-px flex h-[15px] w-[100px] items-center justify-center gap-[2px] rounded-[2px] border border-[#989898] bg-gradient-to-b from-[#f4f4f4] to-[#c8c8c8]">
          <span className="h-[7px] w-px bg-[#555]" />
          <span className="h-[7px] w-px bg-[#555]" />
          <span className="h-[7px] w-px bg-[#555]" />
        </div>
        <span className="flex-1" />
        <Arrow dir="right" />
      </div>
      <span />
    </main>
  );
}

/* ---------- layer bar ---------- */

function LayerButton({ n }: { n: number }) {
  const active = n === 1 || n === 11;
  const fill = n === 11 ? "bg-[#1de98b]" : n === 1 ? "bg-[#c4c4cc]" : "bg-[#dcdce4]";
  return (
    <button
      className={`relative flex h-[20px] w-[23px] shrink-0 items-center justify-center ${active ? "rounded-[3px] border border-[#555] bg-[#dcdcdc]" : ""}`}
    >
      <span className={`h-[15px] w-[16px] text-center text-[11px] leading-[16px] text-[#1c10b4] ${active ? "border-r border-b border-black" : ""} ${fill} ${UI}`}>
        {n}
      </span>
      <span className="pointer-events-none absolute top-[4px] left-[4px]">
        <Icon size={10}>
          {n === 1 && <S d="M0 6l4 4M4 6l-4 4" />}
          {n === 11 && <F d="M0 0h4v4H0z" />}
          {n === 9 && <F d="M0 0h5v5H0z" c="#6e6a10" />}
          {n !== 1 && n !== 11 && <S d={n < 10 ? "M0 5.500h7M5.500 2v4" : "M1 5.500h6M6.500 1v5"} />}
        </Icon>
      </span>
    </button>
  );
}

const Sheets = ({ cs, y = 2 }: { cs: string[]; y?: number }) => (
  <>
    {[...cs].reverse().map((c, i) => {
      const t = y + (cs.length - 1 - i) * 3;
      return <S key={t} d={`M4.500 ${t}.5h11l-4 4h-11z`} f={c} />;
    })}
  </>
);

function LayerBar() {
  return (
    <div className="flex h-[32px] shrink-0 items-center border-b border-[#8a8a8a] bg-[#f0f0f0]">
      <span className="ml-[3px] h-[22px] w-[2px] border-r border-r-[#a0a0a0] bg-white" />
      <div className="ml-[7px] flex h-full items-center border-r border-[#a8a8a8] pr-[7px] pb-[2px]" role="toolbar" aria-label="Livelli">
        {range(1, 30).map((n) => (
          <LayerButton key={n} n={n} />
        ))}
        <Separator />
        <button aria-label="Tutti i livelli" className="flex w-[23px] justify-center"><Icon><Sheets cs={["#0a6a1c", "#c02020", "#f1ea74", "#14148a"]} y={1} /></Icon></button>
        <button aria-label="Livello attivo" className="flex w-[23px] justify-center"><Icon><S d="M4.500 1.500h10l-3 3M4.500 11.500h10l-3 3h-10z" c={G} /><S d="M4.500 5.500h10l-3 4h-11z" c="#a01818" f="#d81f1f" /></Icon></button>
        <button aria-label="Sposta livello" className="flex w-[23px] justify-center"><Icon><F d="M4 1h12l-3 4H1z" c={G} /><S d="M3.500 11.500h11l-3 3h-11zM8.500 6v4M6.500 8.500h4" c={G} /></Icon></button>
        <Separator />
        <button aria-label="Ordine livelli" className="flex w-[23px] justify-center"><Icon><Sheets cs={["#3ce0d8", "#f4f4b0", "#fff"]} y={1} /><S d="M11 8h3v3l-2 2v3" c="#1414b4" w={1.500} /></Icon></button>
        <Separator />
        {range(1, 5).map((n) => (
          <button key={n} className="flex w-[23px] shrink-0 justify-center">
            <span className="flex h-[15px] w-[16px] items-center justify-center rounded-[2px] border border-[#9c9c9c] p-px">
              <span className="flex h-full w-full items-center justify-center border border-[#a4a4a4] font-['Liberation_Sans'] text-[10px] leading-none text-[#8c8c8c]">{n}</span>
            </span>
          </button>
        ))}
      </div>
    </div>
  );
}

/* ---------- status bar ---------- */

function StatusBar() {
  return (
    <footer className={`flex h-[19px] shrink-0 items-center border-t border-white bg-[#f1edec] text-[11px] leading-[17px] whitespace-nowrap text-black ${UI}`}>
      <span className="pl-[2px]">Premi il tasto F1 per la Guida</span>
      <span className="ml-auto w-[277px]">Portale 1 Vap/Livello 10</span>
      <span className="w-[70px] border-l border-[#d8d4d4] pr-[7px] text-center">&lt;- 1698 -&gt;</span>
      <span className="w-[46px] border-l border-[#d8d4d4] text-center">-01605</span>
      <span className="w-[47px] border-l border-[#d8d4d4] pr-[2px] text-center">-01714</span>
    </footer>
  );
}

/* ---------- taskbar ---------- */

const StartOrb = () => (
  <svg width="38" height="38" viewBox="0 0 38 38" aria-hidden="true">
    <defs>
      <radialGradient id="orb" cx="0.5" cy="0.85" r="0.9">
        <stop offset="0" stopColor="#4fd0f4" />
        <stop offset="0.5" stopColor="#1d5f93" />
        <stop offset="1" stopColor="#9ab4c4" />
      </radialGradient>
    </defs>
    <circle cx="19" cy="19" r="18" fill="url(#orb)" stroke="#5f7f92" />
    <path d="M12 10c3-2 5-1 7 0l-2 8c-2-1-4-2-7 0z" fill="#ef6a2c" />
    <path d="M20 11c3 1 5 1 8-1l-2 8c-3 2-5 2-8 0z" fill="#8cc63e" />
    <path d="M10 19c3-2 5-1 7 0l-2 8c-2-1-4-2-7 0z" fill="#4aa3e0" />
    <path d="M18 20c3 1 5 1 8-1l-2 8c-3 2-5 2-8 0z" fill="#fbcb2e" />
    <path d="M4 13C8 1 30 1 34 13 26 8 12 8 4 13z" fill="#fff" opacity="0.35" />
  </svg>
);

const Explorer = () => (
  <svg width="34" height="34" viewBox="0 0 34 34" aria-hidden="true">
    <path d="M17 6c7 0 12 5 11 13H12c0 6 8 7 10 2h6c-3 13-22 12-22-3C6 11 11 6 17 6zm-5 9h10c-1-6-9-6-10 0z" fill="#5fc4f5" stroke="#2381c0" strokeWidth="0.8" />
    <path d="M4 31C-2 25 14 3 29 3c4 1 2 7 0 9 1-4 1-6-3-6C18 7 6 20 6 27c0 2 2 3 5 2-2 2-5 3-7 2z" fill="#f4c62e" />
  </svg>
);

const Player = () => (
  <svg width="28" height="28" viewBox="0 0 30 28" aria-hidden="true">
    <path d="M10 1h18v24H10z" fill="#6ea9d0" /><path d="M6 2h19v24H6z" fill="#9ccbe6" /><path d="M2 3h20v22H2z" fill="#c9dfea" stroke="#7fb0cc" />
    <circle cx="12" cy="14" r="9" fill="#ee7b21" stroke="#fff" strokeWidth="0.500" />
    <path d="M9 9l8 5-8 5z" fill="#fff" />
  </svg>
);

const Folder = () => (
  <svg width="34" height="32" viewBox="0 0 34 32" aria-hidden="true">
    <path d="M2 4h10l2 3h17v21H2z" fill="#e9c968" />
    <path d="M4 1h8v6H4zM13 3h9v5h-9z" fill="#fff3c0" />
    <path d="M5 2h3v2H5z" fill="#2fae4a" /><path d="M14 4h4v2h-4z" fill="#d8372b" /><path d="M22 6h5v2h-5z" fill="#2f8fd8" />
    <path d="M1 10h32v18H1z" fill="#f7e39b" stroke="#d8b75a" />
    <path d="M6 29v-8q0-4 4-4h14q4 0 4 4v8h-4v-7H10v7z" fill="#8fcdf0" stroke="#5f9fc8" />
  </svg>
);

const Chrome = () => (
  <svg width="30" height="30" viewBox="0 0 30 30" aria-hidden="true">
    <circle cx="15" cy="15" r="14.500" fill="#f8cf2f" />
    <path d="M2.500 7.700A14.500 14.500 0 0 1 27.600 7.700H15a7 7 0 0 0-6 4z" fill="#dd4a3a" />
    <path d="M2.500 7.700A14.500 14.500 0 0 0 14 29.500l6-10.500a7 7 0 0 1-11.500 0z" fill="#2ea354" />
    <circle cx="15" cy="15" r="7" fill="#fff" /><circle cx="15" cy="15" r="5.500" fill="#3f7fe8" />
  </svg>
);

const WinTrack = () => (
  <svg width="34" height="34" viewBox="0 0 34 34" aria-hidden="true">
    <path d="M5 20.500h24M4 26.500h26M5 32.500h26" stroke="#111" strokeWidth="1.500" />
    <path d="M6 22l6-3 4 5 6-4 4 6 5-3M6 29l6-4 5 6 6-5 5 4" fill="none" stroke="#c01f2a" strokeWidth="1.500" />
    <path d="M7 8l8 1 8-5 8-3-2 6-9 6-9 2z" fill="#1a1a9a" stroke="#111" strokeWidth="0.800" />
    <path d="M2 15l5-5 5 1-3 4-6 2z" fill="#f4ec42" stroke="#111" strokeWidth="0.800" />
    <path d="M22 11h11v12H22z" fill="#fff" />
    <text x="22" y="21" fontSize="10" fontWeight="bold" fill="#1818a8" className="font-['Liberation_Sans',sans-serif]">13</text>
  </svg>
);

const Paint = () => (
  <svg width="34" height="34" viewBox="0 0 34 34" aria-hidden="true">
    <path d="M16 7c9-1 15 5 14 12-1 9-9 13-14 11-4-2 0-5-3-7s-6 3-9 0C-1 17 6 8 16 7z" fill="#cfe6f6" stroke="#7faac8" />
    <circle cx="8" cy="18" r="2.500" fill="#d8372b" /><circle cx="12" cy="13" r="2.500" fill="#e9962a" /><circle cx="19" cy="12" r="2.500" fill="#4fae3a" />
    <circle cx="17" cy="20" r="2.500" fill="#10161d" /><circle cx="14" cy="26" r="2.500" fill="#f2c830" />
    <path d="M26 12l3 1-6 18-2 1z" fill="#d98526" /><path d="M25 1c4-1 8 0 8 4-1 4-4 5-3 8l-4-1c1-3-2-7-1-11z" fill="#a87a4e" />
  </svg>
);

const TRAY: [string, React.ReactNode][] = [
  ["Dropbox", <F d="M1 4l3.500-2L8 4 4.500 6zM8 4l3.500-2L15 4l-3.500 2zM1 8l3.500-2L8 8l-3.500 2zM8 8l3.500-2L15 8l-3.500 2zM5 11l3-2 3 2-3 2z" c="#fff" />],
  ["Avviso", <><circle cx="10" cy="6" r="5.500" fill="#4d83e6" /><F d="M9 2h2v5H9zM9 8h2v2H9z" c="#fff" /><F d="M1 11h7v4H1z" c="#9fb7e8" /><F d="M3 9h4v3H3z" c="#3a62b8" /></>],
  ["Stampante", <><F d="M1 5l6-4 9 6v4l-3 2-4-4-4 3-4-3 3-3z" c="#e4e4e4" /><S d="M3 5l9 5M6 3l8 5" c="#555" /><S d="M1 10l3 2-2 2M2 14l5-3" c="#d03030" w={1.500} /><S d="M1 12l6-3" c="#2a9a3a" /></>],
  ["Antivirus", <><circle cx="8" cy="8" r="7" fill="#f2b51e" /><circle cx="8" cy="8" r="4.500" fill="#f7f0d0" /><circle cx="11" cy="11" r="4.500" fill="#2f9a3a" /><S d="M8 11l2.500 2L14 8" c="#fff" w={1.500} /></>],
  ["Rimozione hardware", <><F d="M1 4h8v8H1zM3 1h4v3H3z" c="#9a9a9a" /><circle cx="11" cy="11" r="5" fill="#2fae3a" /><S d="M8.500 11l2 2 3-4" c="#fff" w={1.500} /></>],
  ["Desktop remoto", <><F d="M1 2h3v12H1z" c="#555" /><F d="M4 4h10v8H4z" c="#1a63b8" /><S d="M5 8l2-2 2 3 3-3 3 4M6 13.500h8" c="#d7ecff" /></>],
  ["Audio", <><F d="M1 6h4l5-5v14l-5-5H1z" c="#e0563a" /><S d="M12.500 4v8M14.500 3v10" c="#5a1a14" /></>],
  ["Chiave", <><F d="M0 0h16v16H0z" c="#dfeefa" /><F d="M1 1h14v14H1z" c="#3a83c8" /><circle cx="6" cy="5.500" r="2.500" stroke="#fff" strokeWidth="1.500" fill="none" /><S d="M7.500 7.500l5 5M11 10l-2 2" c="#fff" w={1.500} /></>],
  ["Dispositivo", <><F d="M5 6l5 1 3 4-4 2-5-3z" c="#a8a8a8" /><S d="M2 4l5 4M1 11h8M10 4l2 5M12 4l2 8M6 13l8-1" c="#c8c8c8" /></>],
  ["Disco", <><F d="M2 4l9-1 4 3v6l-4 3-10-1V7z" c="#c4c4c4" /><F d="M1 8h12v5H1z" c="#8f9a8f" /><S d="M6 9l3 4 6-9" c="#3fc040" w={2.500} /></>],
  ["Rete", <><S d="M4.500 4.500h10v8h-10zM7 14.500h7" c="#fff" w={1.500} /><S d="M1.500 1v4M4.500 1v3M0 5h5M2.500 5v9h2" c="#fff" /></>],
  ["Volume", <><F d="M1 6h3l4-4v12l-4-4H1z" c="#fff" /><path d="M10 5q2 3 0 6M12 3.500q3.500 4.500 0 9M14 2q4 6 0 12" stroke="#ddd" /></>],
  ["Centro operativo", <><F d="M2 1h1.500v14H2zM4 2h5v2h6l-2 3 1 2H9V8H4z" c="#fff" /></>],
];

function Taskbar() {
  return (
    <footer className="flex h-[39px] shrink-0 items-center border-t border-[#5b6670] bg-[linear-gradient(110deg,#10161c_0%,#0c1117_30%,#1b2229_36%,#141b22_46%,#0a0f15_47%,#0b0f14_60%,#1a2027_62%,#05080c_70%,#0b0f13_100%)]">
      <button aria-label="Start" className="ml-[8px] flex w-[38px] justify-center"><StartOrb /></button>
      <div className="ml-[14px] flex items-center">
        <button aria-label="Internet Explorer" className="flex w-[60px] justify-center"><Explorer /></button>
        <button aria-label="Windows Media Player" className="flex w-[60px] justify-center"><Player /></button>
        <button aria-label="Esplora risorse" className="flex w-[66px] justify-center"><Folder /></button>
        <button aria-label="Google Chrome" className="flex w-[58px] justify-center"><Chrome /></button>
      </div>
      <button aria-label="WinTrack" className="ml-[4px] flex h-[38px] w-[58px] items-center justify-center rounded-[3px] border border-[#d4d8da] bg-gradient-to-b from-[#a9adb0] via-[#85898c] to-[#b4b7b8]"><WinTrack /></button>
      <button aria-label="Paint" className="ml-[4px] flex h-[38px] w-[58px] items-center justify-center rounded-[3px] border border-[#8b9298] bg-gradient-to-b from-[#6e757a] via-[#363c42] to-[#4a5056]"><Paint /></button>
      <div className="ml-auto flex">
        {TRAY.map(([n, ic]) => (
          <button key={n} aria-label={n} className="flex w-[24px] justify-center">
            <Icon smooth>{ic}</Icon>
          </button>
        ))}
      </div>
      <div className={`ml-[10px] w-[58px] text-center text-[12px] leading-[17px] text-white ${UI}`}>
        <div>14:08</div>
        <div>15/07/18</div>
      </div>
      <button aria-label="Mostra desktop" className="ml-[6px] h-full w-[13px] border border-[#5e666c] bg-gradient-to-b from-[#5a6066] via-[#15191e] to-[#22272c]" />
    </footer>
  );
}

export default function App() {
  return (
    <div className="flex min-h-screen flex-col overflow-hidden bg-[#f0f0f0]">
      <TitleBar />
      <MenuBar />
      <Toolbar />
      <div className="flex flex-1">
        <Strip />
        <Palette />
        <Workspace />
      </div>
      <LayerBar />
      <StatusBar />
      <Taskbar />
    </div>
  );
}
